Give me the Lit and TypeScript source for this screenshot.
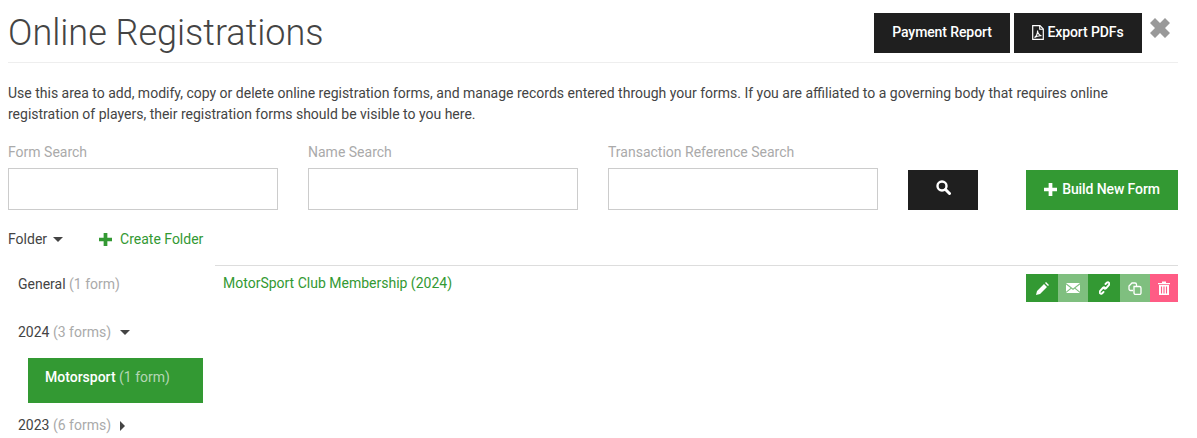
import { LitElement, html, css } from "lit";
import { customElement } from "lit/decorators.js";

const caretDown = html`<svg class="caret" width="10" height="5" viewBox="0 0 10 5"><path d="M0 0h10L5 5z" fill="#444"/></svg>`;
const plus = (s: number, c: string) => html`<svg width=${s} height=${s} viewBox="0 0 14 14"><path d="M5 0h4v5h5v4H9v5H5V9H0V5h5z" fill=${c}/></svg>`;

@customElement("app-root")
export class AppRoot extends LitElement {
  static styles = css`
    :host { display: block; box-sizing: border-box; width: 1197px; height: 438px; overflow: hidden; padding: 0 19px 0 8px; background: #fff; font-family: Roboto, sans-serif; font-size: 14px; color: #444; }
    * { box-sizing: border-box; }
    .head { display: flex; align-items: flex-start; height: 63px; padding-top: 13px; border-bottom: 1px solid #eee; }
    h1 { flex: 1; margin: 0; font-size: 36px; font-weight: 300; line-height: 40px; color: #444; }
    .btn { display: flex; align-items: center; justify-content: center; gap: 3px; height: 40px; padding-bottom: 2px; background: #1f1f1f; color: #fff; font-size: 14px; font-weight: 500; letter-spacing: -0.1px; }
    .pay { width: 136px; margin-right: 4px; }
    .pdf { width: 128px; }
    .close { margin: 5px 8px 0 8px; display: block; }
    p { margin: 20px 0 0; line-height: 21px; }
    .search { display: flex; margin-top: 17px; height: 70px; }
    .field { width: 270px; margin-right: 30px; }
    label { display: block; height: 26px; line-height: 21px; color: #aaa; }
    .field .box { height: 42px; border: 1px solid #ccc; }
    .go { width: 70px; margin: 28px 48px 0 0; padding-bottom: 6px; }
    .build { width: 152px; margin-top: 28px; background: #339933; gap: 5px; font-weight: 500; }
    .main { display: grid; grid-template-columns: 207px 1fr; margin-top: 13px; }
    .side { display: flex; flex-direction: column; }
    .fhead { display: flex; align-items: center; height: 29px; line-height: 29px; }
    .fhead .caret { margin-left: 6px; }
    .create { display: flex; align-items: center; gap: 8px; margin-left: 36px; color: #339933; }
    .item { padding-left: 10px; line-height: 21px; display: flex; align-items: center; white-space: pre; }
    .gen { margin-top: 20px; }
    .yr { margin-top: 27px; }
    .item span, .sel span { color: #aaa; }
    .item svg { margin-left: 9px; }
    .sel { width: 175px; height: 45px; margin: 15px 0 12px 20px; padding: 9px 0 0 17px; line-height: 21px; background: #339933; color: #fff; font-weight: 500; }
    .sel span { font-weight: 400; color: #b5d6b5; }
    .list { margin: 40px 0 0 0; border-top: 1px solid #ddd; padding: 8px 0 0 8px; display: flex; justify-content: space-between; }
    .list a { color: #339933; line-height: 18px; }
    .acts { display: flex; height: 28px; }
    .acts div { display: flex; align-items: center; justify-content: center; }
    .dk { background: #339933; } .lt { background: #7fbf7f; } .rd { background: #ff5c85; }
    .w32 { width: 32px; } .w30 { width: 30px; } .w28 { width: 28px; }
  `;

  render() {
    return html`
      <div class="head">
        <h1>Online Registrations</h1>
        <div class="btn pay">Payment Report</div>
        <div class="btn pdf">
          <svg width="12" height="15" viewBox="0 0 12 15"><path d="M.7.7h7.300l3.300 3.300v10.300H.7z" fill="none" stroke="#fff" stroke-width="1.200"/><path d="M7.700 1v3.300h3.300M2.500 12.500c2-1 3.300-4.500 3-7 .2 2.500 2 4.700 4 5.300-2.200-.2-5 .3-7 1.700z" fill="none" stroke="#fff" stroke-width="1.100"/></svg>
          Export PDFs
        </div>
        <svg class="close" width="20" height="20" viewBox="0 0 20 20"><path d="M5 0l5 5 5-5 5 5-5 5 5 5-5 5-5-5-5 5-5-5 5-5-5-5z" fill="#999"/></svg>
      </div>
      <p>Use this area to add, modify, copy or delete online registration forms, and manage records entered through your forms. If you are affiliated to a governing body that requires online registration of players, their registration forms should be visible to you here.</p>
      <div class="search">
        <div class="field"><label>Form Search</label><div class="box"></div></div>
        <div class="field"><label>Name Search</label><div class="box"></div></div>
        <div class="field"><label>Transaction Reference Search</label><div class="box"></div></div>
        <div class="btn go">
          <svg width="15" height="15" viewBox="0 0 15 15"><circle cx="6" cy="6" r="4.500" fill="none" stroke="#fff" stroke-width="2.400"/><path d="M9.500 9.500L13.500 13.500" stroke="#fff" stroke-width="3" stroke-linecap="round"/></svg>
        </div>
        <div class="btn build">${plus(13, "#fff")}Build New Form</div>
      </div>
      <div class="main">
        <div class="side">
          <div class="fhead">Folder ${caretDown}
            <div class="create">${plus(13, "#339933")}Create Folder</div>
          </div>
          <div class="item gen">General <span>(1 form)</span></div>
          <div class="item yr">2024 <span>(3 forms)</span>${caretDown}</div>
          <div class="sel">Motorsport <span>(1 form)</span></div>
          <div class="item">2023 <span>(6 forms)</span><svg width="5" height="10" viewBox="0 0 5 10"><path d="M0 0l5 5-5 5z" fill="#444"/></svg></div>
        </div>
        <div>
          <div class="list">
            <a>MotorSport Club Membership (2024)</a>
            <div class="acts">
              <div class="dk w32"><svg width="13" height="13" viewBox="0 0 13 13"><path d="M0 13l1-4 7-7 3 3-7 7zM9 1l1-1 3 3-1 1z" fill="#fff"/></svg></div>
              <div class="lt w30"><svg width="14" height="10" viewBox="0 0 14 10"><path d="M0 0h14L7 5.500zM0 1.500v7.200L4.500 5zM14 1.500v7.200L9.500 5zM5.300 5.700L7 7l1.700-1.300L14 10H0z" fill="#fff"/></svg></div>
              <div class="dk w32"><svg width="11" height="14" viewBox="0 0 11 14" fill="none" stroke="#fff" stroke-width="1.900" stroke-linecap="round"><path d="M6.500 3L8 1.600a1.500 1.500 0 0 1 2 2.200L7 7.300a1.500 1.500 0 0 1-2 0"/><path d="M4.500 11L3 12.400a1.500 1.500 0 0 1-2-2.200L4 6.700a1.500 1.500 0 0 1 2 0"/></svg></div>
              <div class="lt w30"><svg width="14" height="13" viewBox="0 0 14 13" fill="none" stroke="#fff" stroke-width="1.300"><path d="M5 8.500H2.500a1.500 1.500 0 0 1-1.500-1.500V4l3-3h3a1.500 1.500 0 0 1 1.500 1.500V4.500"/><path d="M6 4.500h5.500a1.500 1.500 0 0 1 1.500 1.500v5a1.500 1.500 0 0 1-1.500 1.500h-4A1.500 1.500 0 0 1 6 11z"/></svg></div>
              <div class="rd w28"><svg width="12" height="14" viewBox="0 0 12 14"><path d="M0 2h4V.5h4V2h4v1.300H0zM1 4h10v10H1z" fill="#fff"/><path d="M3.500 5.500v7M6 5.500v7M8.500 5.500v7" stroke="#ff5c85" stroke-width="1.100"/></svg></div>
            </div>
          </div>
        </div>
      </div>
    `;
  }
}
